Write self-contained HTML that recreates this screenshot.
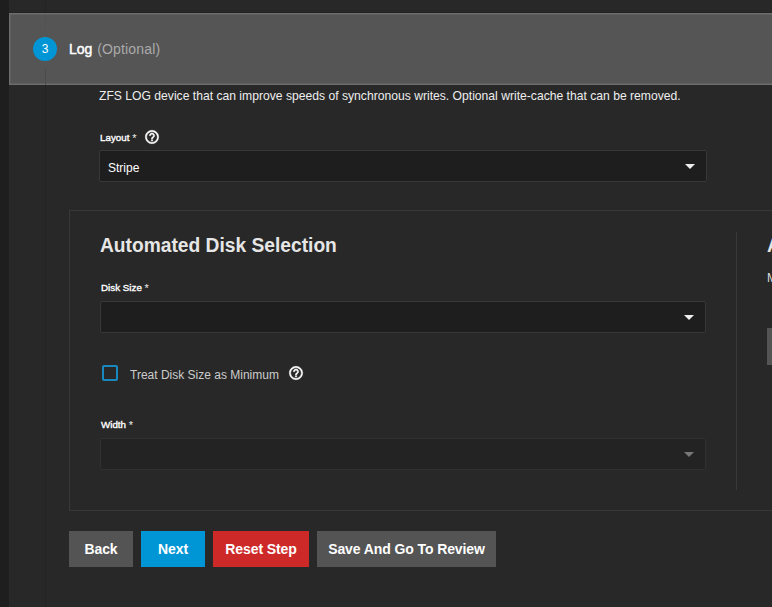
<!DOCTYPE html>
<html><head><meta charset="utf-8">
<style>
*{box-sizing:border-box;margin:0;padding:0}
html,body{width:772px;height:607px;overflow:hidden;background:#282828;font-family:"Liberation Sans",sans-serif;color:#fff}
.abs{position:absolute}
#strip{left:0;top:0;width:9px;height:607px;background:#1e1e1e}
#vline{left:45px;top:0;width:1px;height:607px;background:#232323}
#hdr{left:9px;top:13px;width:770px;height:72px;background:#555;border:1px solid #6e6e6e;box-shadow:0 -1px 0 #222, inset 1px 1px 0 #5f5f5f, inset -1px -1px 0 #5f5f5f}
#circ{left:33px;top:37px;width:24px;height:24px;border-radius:50%;background:#0095d5;color:#fff;font-size:12px;line-height:24px;text-align:center}
#log{left:69px;top:41px;font-size:14px;font-weight:normal;color:#fff;white-space:nowrap;line-height:16px}
#log b{font-weight:normal;-webkit-text-stroke:0.45px #fff}
#log span{font-weight:normal;color:#aaa;margin-left:1px;letter-spacing:0.15px}
.txt{white-space:nowrap}
#desc{left:99px;top:89px;font-size:12.15px;color:#eee;line-height:14px}
.lbl{font-size:9.8px;font-weight:normal;-webkit-text-stroke:0.35px #fff;color:#fff;line-height:12px;white-space:nowrap}
.lbl i{font-style:normal;font-size:11px;-webkit-text-stroke:0;color:#eee;margin-left:0;position:relative;top:1px}
.help{width:14px;height:14px;border:1.6px solid #fff;border-radius:50%;font-size:10px;font-weight:bold;text-align:center;line-height:11px;color:#fff}
.sel{background:#1e1e1e;border:1px solid #383838;border-radius:2px}
.arrow{width:0;height:0;border-left:5px solid transparent;border-right:5px solid transparent;border-top:5px solid #eee}
#card{left:69px;top:210px;width:760px;height:301px;border:1px solid #383838}
#h2{left:100px;top:234px;font-size:20px;font-weight:bold;color:#e6e6e6;line-height:22px;white-space:nowrap;transform:scaleX(0.96);transform-origin:0 0}
#divider{left:736px;top:232px;width:1px;height:258px;background:#383838}
.btn{height:36px;font-size:14px;font-weight:bold;color:#fff;letter-spacing:-0.1px;text-align:center;line-height:36px;white-space:nowrap}
</style></head><body>
<div id="strip" class="abs"></div>
<div id="vline" class="abs"></div>
<div id="hdr" class="abs"></div>
<div class="abs" style="left:45px;top:15px;width:1px;height:14px;background:#525252"></div>
<div class="abs" style="left:45px;top:69px;width:1px;height:16px;background:#4b4b4b"></div>
<div id="circ" class="abs">3</div>
<div id="log" class="abs"><b>Log</b> <span>(Optional)</span></div>
<div id="desc" class="abs txt">ZFS LOG device that can improve speeds of synchronous writes. Optional write-cache that can be removed.</div>

<div class="abs lbl" style="left:100px;top:131px">Layout <i>*</i></div>
<svg class="abs" style="left:144px;top:129px" width="16" height="16" viewBox="0 0 24 24"><path fill="#fff" stroke="#fff" stroke-width="0.7" d="M11 18h2v-2h-2v2zm1-16C6.480 2 2 6.48 2 12s4.48 10 10 10 10-4.48 10-10S17.52 2 12 2zm0 18c-4.41 0-8-3.59-8-8s3.59-8 8-8 8 3.59 8 8-3.59 8-8 8zm0-14c-2.21 0-4 1.790-4 4h2c0-1.1.9-2 2-2s2 .9 2 2c0 2-3 1.75-3 5h2c0-2.25 3-2.5 3-5 0-2.21-1.79-4-4-4z"/></svg>
<div class="abs sel" style="left:99px;top:150px;width:608px;height:32px"></div>
<div class="abs txt" style="left:108px;top:161px;font-size:12px;color:#fff;line-height:14px">Stripe</div>
<div class="abs arrow" style="left:685px;top:164px"></div>

<div id="card" class="abs"></div>
<div id="h2" class="abs">Automated Disk Selection</div>
<div id="divider" class="abs"></div>
<div class="abs" style="left:767px;top:234px;font-size:20px;line-height:22px;font-weight:bold;color:#e6e6e6;transform:scaleX(0.96);transform-origin:0 0">A</div>
<div class="abs" style="left:767px;top:271px;font-size:12px;color:#ddd">M</div>
<div class="abs" style="left:767px;top:328px;width:10px;height:37px;background:#545454"></div>

<div class="abs lbl" style="left:101px;top:281px">Disk Size <i>*</i></div>
<div class="abs sel" style="left:100px;top:301px;width:606px;height:32px"></div>
<div class="abs arrow" style="left:684px;top:315px"></div>

<div class="abs" style="left:102px;top:365px;width:16px;height:16px;border:2px solid #1889be;border-radius:2px"></div>
<div class="abs txt" style="left:130px;top:368px;font-size:12px;color:#ccc;line-height:14px">Treat Disk Size as Minimum</div>
<svg class="abs" style="left:288px;top:365px" width="16" height="16" viewBox="0 0 24 24"><path fill="#fff" stroke="#fff" stroke-width="0.7" d="M11 18h2v-2h-2v2zm1-16C6.480 2 2 6.48 2 12s4.48 10 10 10 10-4.48 10-10S17.52 2 12 2zm0 18c-4.41 0-8-3.59-8-8s3.59-8 8-8 8 3.59 8 8-3.59 8-8 8zm0-14c-2.21 0-4 1.790-4 4h2c0-1.1.9-2 2-2s2 .9 2 2c0 2-3 1.75-3 5h2c0-2.25 3-2.5 3-5 0-2.21-1.79-4-4-4z"/></svg>

<div class="abs lbl" style="left:101px;top:418px">Width <i>*</i></div>
<div class="abs sel" style="left:100px;top:438px;width:606px;height:32px;background:#232323;border-color:#303030"></div>
<div class="abs arrow" style="left:684px;top:452px;border-top-color:#777"></div>

<div class="abs btn" style="left:69px;top:531px;width:64px;background:#545454">Back</div>
<div class="abs btn" style="left:141px;top:531px;width:64px;background:#0095d5">Next</div>
<div class="abs btn" style="left:213px;top:531px;width:96px;background:#ce2929">Reset Step</div>
<div class="abs btn" style="left:317px;top:531px;width:179px;background:#545454">Save And Go To Review</div>
</body></html>
